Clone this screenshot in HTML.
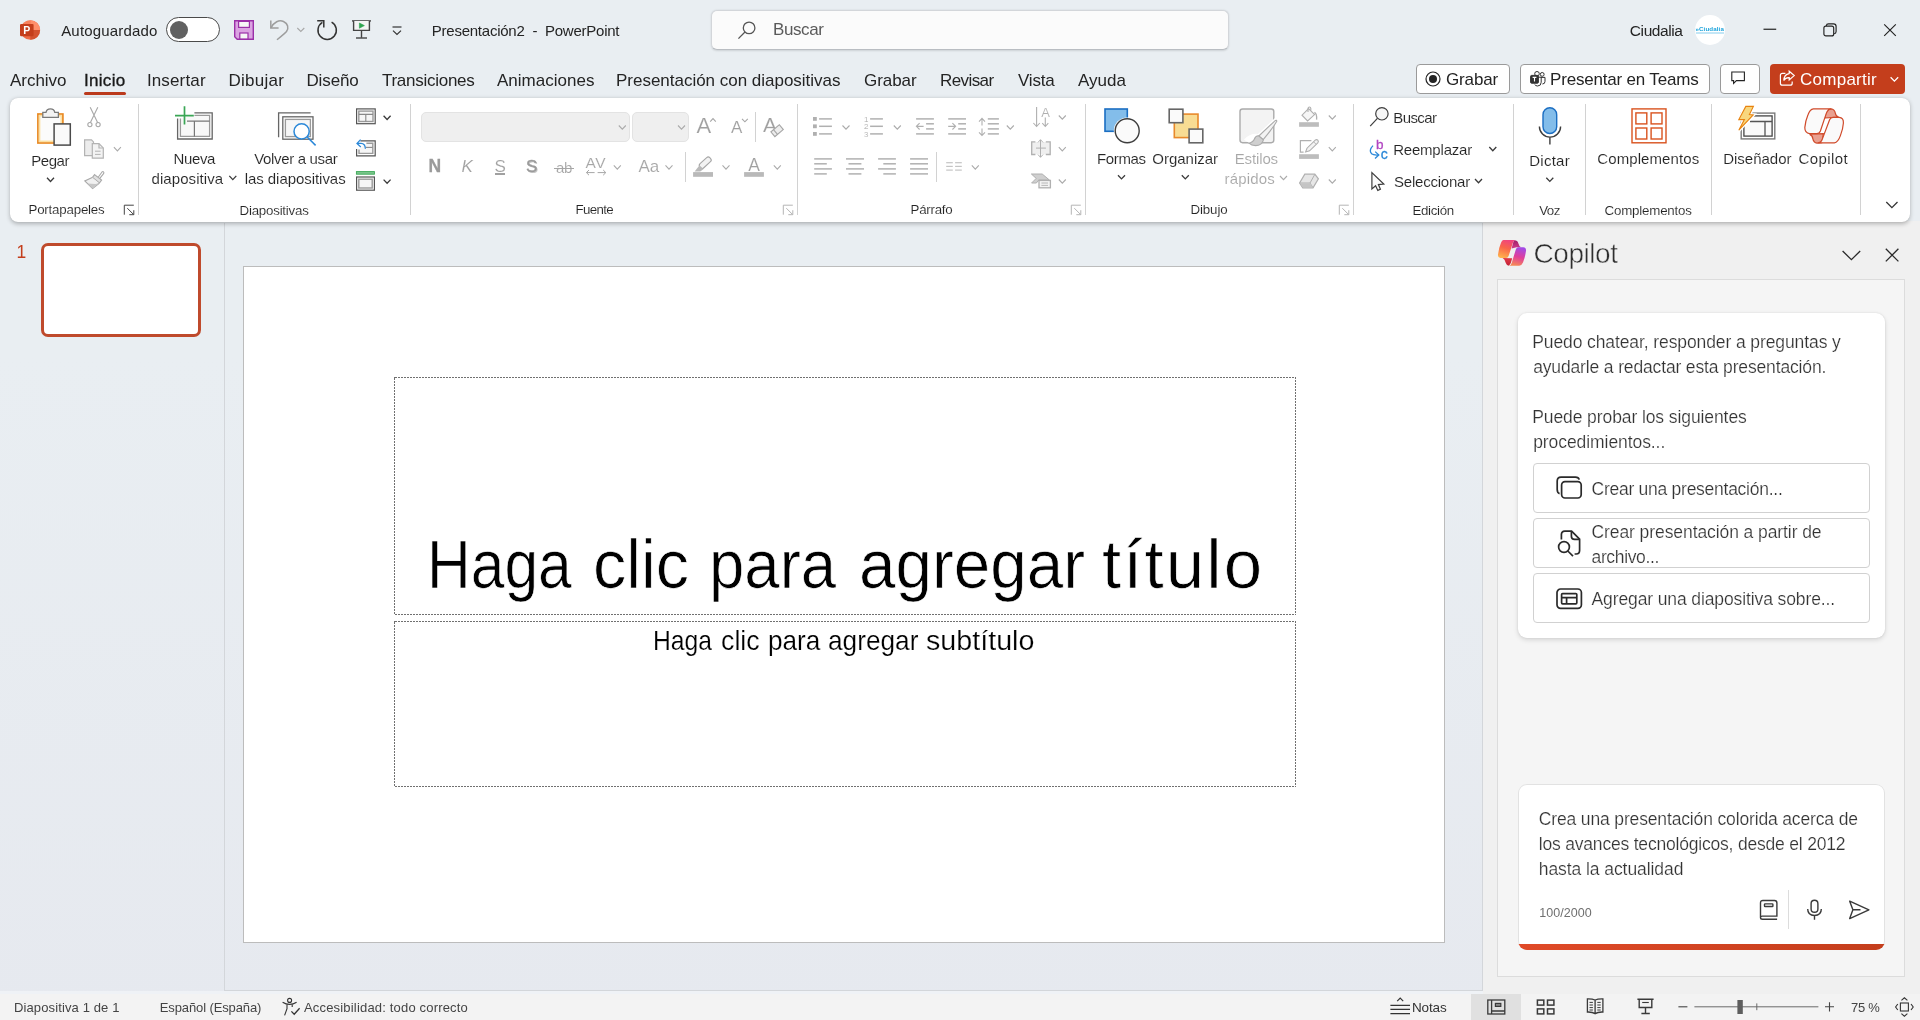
<!DOCTYPE html>
<html lang="es"><head>
<meta charset="utf-8">
<title>Presentación2 - PowerPoint</title>
<style>
html,body{margin:0;padding:0;}
html{background:linear-gradient(180deg,#e9eef2 0%,#e9eef2 35%,#e6e9ef 100%);min-height:1020px;}
body{width:1920px;height:1020px;overflow:hidden;position:relative;will-change:transform;font-family:"Liberation Sans",sans-serif;color:#242424;}
.a{position:absolute;box-sizing:border-box;}
.t{position:absolute;white-space:nowrap;line-height:1;font-size:15px;color:#242424;}
.g{color:#a6a6a6;}
#ribboncontent .t{-webkit-text-stroke:0.12px #fff;}
svg{position:absolute;overflow:visible;}
.sep{position:absolute;width:1px;background:#d2d2d2;}
</style>
</head>
<body>
<!-- ===== background blocks ===== -->
<div class="a" id="editarea" style="left:224px;top:223px;width:1259px;height:768px;border-left:1px solid #d3d6da;border-right:1px solid #d3d6da;border-bottom:1px solid #d3d6da;"></div>
<div class="a" id="slide" style="left:243px;top:266px;width:1202px;height:677px;background:#fff;border:1px solid #bcbcbc;"></div>
<div class="a" id="copilotpane" style="left:1483px;top:221px;width:437px;height:773px;background:#f0f0f0;"></div>
<div class="a" id="chatframe" style="left:1497px;top:279px;width:408px;height:698px;background:#f5f5f5;border:1px solid #dcdcdc;"></div>
<div class="a" id="ribbon" style="left:10px;top:98px;width:1900px;height:124px;background:#fff;border-radius:8px;box-shadow:0 1.5px 4px rgba(0,0,0,.25),0 0 1px rgba(0,0,0,.14);"></div>
<div class="a" style="left:0;top:991px;width:1483px;height:3px;background:#eff2f6;"></div>
<div class="a" id="statusbar" style="left:0;top:994px;width:1920px;height:26px;background:#f3f3f3;"></div>

<!-- ===== TITLE BAR ===== -->
<div id="titlebar">
<!-- PowerPoint logo -->
<svg style="left:20px;top:20px" width="20" height="20" viewBox="0 0 20 20">
  <circle cx="10.3" cy="10" r="9.8" fill="#ed6c47"></circle>
  <path d="M10.3 0.2 A9.8 9.8 0 0 1 20.1 10 L10.3 10 Z" fill="#ff8f6b"></path>
  <path d="M10.3 10 L20.1 10 A9.8 9.8 0 0 1 10.3 19.8 Z" fill="#d35230"></path>
  <path d="M10.3 0.2 A9.8 9.8 0 0 0 2 4.8 L10.3 4.8 Z" fill="#ff8f6b" opacity="0.6"></path>
  <rect x="0" y="3.9" width="13.6" height="12.4" rx="1.2" fill="#c43e1c"></rect>
  <text x="6.7" y="13.9" font-family="Liberation Sans, sans-serif" font-weight="bold" font-size="10.5" fill="#fff" text-anchor="middle">P</text>
</svg>
<span class="t" style="left: 61.2px; font-size: 15px; top: 23px; letter-spacing: 0.171px;">Autoguardado</span>
<div class="a" style="left:166px;top:17px;width:54px;height:25px;border:1px solid #4a4a4a;border-radius:13px;background:#fff;"></div>
<div class="a" style="left:170px;top:20.6px;width:18px;height:18px;border-radius:9px;background:#616161;"></div>
<!-- save -->
<svg style="left:234px;top:20px" width="20" height="20" viewBox="0 0 20 20">
  <path d="M0.7 0.7 H19.3 V19.3 H3.2 L0.7 16.8 Z" fill="#dba3e2" stroke="#9b30a8" stroke-width="1.4"></path>
  <rect x="4.6" y="1.4" width="10.8" height="6" fill="#f6f6f6" stroke="#9b30a8" stroke-width="1.2"></rect>
  <rect x="5.8" y="13" width="8.2" height="6" fill="#f6f6f6" stroke="#9b30a8" stroke-width="1.2"></rect>
</svg>
<!-- undo -->
<svg style="left:269px;top:19px" width="22" height="22" viewBox="0 0 22 22" fill="none" stroke="#9d9d9d" stroke-width="1.5">
  <path d="M1.8 1.5 V9 H9.6"></path>
  <path d="M2 8.8 C5 3 10 0.5 14.5 2.5 C19 4.6 20 9 17.5 12.5 C15 15.5 11 18 8 20.8"></path>
</svg>
<svg style="left:297px;top:27px" width="8" height="5" viewBox="0 0 8 5" fill="none" stroke="#a8a8a8" stroke-width="1.1"><g transform="translate(0.00 0.50)"><path d="M0.3 0.5 L3.8 4 L7.3 0.5"></path></g></svg>
<!-- redo -->
<svg style="left:316px;top:19px" width="22" height="22" viewBox="0 0 22 22" fill="none" stroke="#333" stroke-width="1.5">
  <path d="M6.4 3.4 A9.2 9.2 0 1 0 15.6 3.2"></path>
  <path d="M1.2 1.8 H7.8 V8.4"></path>
</svg>
<!-- present from beginning -->
<svg style="left:352px;top:20px" width="20" height="20" viewBox="0 0 20 20" fill="none" stroke="#444" stroke-width="1.4">
  <path d="M0 0.9 H19"></path>
  <path d="M1.6 1 V10.4 H17.4 V1" fill="#f4f4f4"></path>
  <path d="M9.5 10.4 V17.8"></path>
  <path d="M4 18 H15"></path>
  <path d="M7.4 3 L12.4 5.6 L7.4 8.2 Z" fill="#2ea44f" stroke="#2ea44f" stroke-width="0.6"></path>
</svg>
<!-- customize QAT -->
<svg style="left:392px;top:26px" width="10" height="10" viewBox="0 0 10 10" fill="none" stroke="#333" stroke-width="1.2">
  <path d="M0.5 1 H9.5"></path><path d="M1 4.6 L5 8.4 L9 4.6"></path>
</svg>
<span class="t" style="left: 431.8px; font-size: 15px; white-space: pre; top: 23px; letter-spacing: -0.242px;">Presentación2  -  PowerPoint</span>
<!-- search -->
<div class="a" style="left:711px;top:10px;width:518px;height:40px;background:#fbfbfb;border:1px solid #d3d6da;border-bottom-color:#b9bdc2;border-radius:6px;box-shadow:0 0.5px 2px rgba(0,0,0,.12);"></div>
<svg style="left:737px;top:20px" width="20" height="20" viewBox="0 0 20 20" fill="none" stroke="#555" stroke-width="1.3">
  <circle cx="12.1" cy="7.9" r="5.8"></circle><path d="M8 12 L1.4 18.6"></path>
</svg>
<span class="t" style="left: 773px; font-size: 17px; color: rgb(90, 90, 90); top: 21px; letter-spacing: -0.404px;">Buscar</span>
<!-- user -->
<span class="t" style="left: 1629.8px; font-size: 15.5px; top: 23px; letter-spacing: -0.402px;">Ciudalia</span>
<div class="a" style="left:1695.2px;top:14.8px;width:30px;height:30.2px;border-radius:15.1px;background:#fff;"></div>
<span class="t" style="left: 1695.4px; font-size: 6.2px; font-weight: bold; color: rgb(26, 163, 220); top: 26px; letter-spacing: 0.12px;">»Ciudalia</span>
<div class="a" style="left:1696px;top:32px;width:27.6px;height:1.7px;background:#c3e6f6;"></div>
<!-- window controls -->
<svg style="left:1763px;top:28px" width="14" height="3" viewBox="0 0 14 3"><path d="M0.5 1.25 H13.2" stroke="#222" stroke-width="1.2"></path></svg>
<svg style="left:1823px;top:23px" width="14" height="14" viewBox="0 0 14 14" fill="none" stroke="#222" stroke-width="1.15"><g transform="translate(0.30 0.30)">
  <rect x="0.6" y="2.8" width="9.8" height="9.8" rx="2"></rect><path d="M3 2.6 V2.4 Q3.2 0.6 5.2 0.6 H10.2 Q12.8 0.6 12.8 3.2 V8.2 Q12.8 10.2 10.8 10.4"></path>
</g></svg>
<svg style="left:1883px;top:23px" width="13" height="13" viewBox="0 0 13 13" fill="none" stroke="#222" stroke-width="1.15"><g transform="translate(0.80 0.90)"><path d="M0.4 0.4 L12 12 M12 0.4 L0.4 12"></path></g></svg>
</div>
<!-- ===== TABS ===== -->
<div id="tabs">
<span class="t" style="left: 10px; font-size: 17px; top: 72px; letter-spacing: -0.027px;">Archivo</span>
<span class="t" style="left: 84px; font-size: 17px; color: rgb(26, 26, 26); -webkit-text-stroke: 0.35px rgb(26, 26, 26); top: 72px; letter-spacing: 0.302px;">Inicio</span>
<div class="a" style="left:84px;top:92px;width:41.6px;height:3px;border-radius:1.5px;background:#bb3a1c;"></div>
<span class="t" style="left: 146.9px; font-size: 17px; top: 72px; letter-spacing: 0.145px;">Insertar</span>
<span class="t" style="left: 228.4px; font-size: 17px; top: 72px; letter-spacing: 0.277px;">Dibujar</span>
<span class="t" style="left: 306.4px; font-size: 17px; top: 72px; letter-spacing: -0.104px;">Diseño</span>
<span class="t" style="left: 382px; font-size: 17px; top: 72px; letter-spacing: -0.271px;">Transiciones</span>
<span class="t" style="left: 497px; font-size: 17px; top: 72px; letter-spacing: 0.016px;">Animaciones</span>
<span class="t" style="left: 616px; font-size: 17px; top: 72px; letter-spacing: -0.015px;">Presentación con diapositivas</span>
<span class="t" style="left: 864px; font-size: 17px; top: 72px; letter-spacing: -0.07px;">Grabar</span>
<span class="t" style="left: 940px; font-size: 17px; top: 72px; letter-spacing: -0.589px;">Revisar</span>
<span class="t" style="left: 1018px; font-size: 17px; top: 72px; letter-spacing: -0.2px;">Vista</span>
<span class="t" style="left: 1078px; font-size: 17px; top: 72px; letter-spacing: 0.019px;">Ayuda</span>
<!-- right buttons -->
<div class="a" style="left:1416px;top:64px;width:94px;height:30px;background:#fff;border:1px solid #9a9a9a;border-radius:4px;"></div>
<svg style="left:1425px;top:71px" width="16" height="16" viewBox="0 0 16 16"><circle cx="8" cy="8" r="7" fill="none" stroke="#242424" stroke-width="1.2"></circle><circle cx="8" cy="8" r="4" fill="#242424"></circle></svg>
<span class="t" style="left: 1446px; font-size: 17px; top: 71px; letter-spacing: -0.154px;">Grabar</span>
<div class="a" style="left:1520px;top:64px;width:190px;height:30px;background:#fff;border:1px solid #9a9a9a;border-radius:4px;"></div>
<svg style="left:1530px;top:71px" width="16" height="16" viewBox="0 0 16 16" fill="none" stroke="#333" stroke-width="1">
  <circle cx="12.2" cy="3.4" r="1.9"></circle><circle cx="7" cy="2.8" r="2.3"></circle>
  <path d="M10.8 6.4 H15 V10.4 Q15 13 12.4 13"></path>
  <path d="M4.4 6.2 H11.2 V11.2 Q11.2 15 7.6 15 Q5.6 15 4.6 13.4"></path>
  <rect x="0.6" y="4.4" width="7.8" height="7.8" rx="1" fill="#333"></rect>
  <path d="M2.6 6.4 H6.4 M4.5 6.4 V10.6" stroke="#fff" stroke-width="1.1"></path>
</svg>
<span class="t" style="left: 1550px; font-size: 17px; top: 71px; letter-spacing: -0.185px;">Presentar en Teams</span>
<div class="a" style="left:1720px;top:64px;width:40px;height:30px;background:#fff;border:1px solid #9a9a9a;border-radius:4px;"></div>
<svg style="left:1731px;top:71px" width="16" height="16" viewBox="0 0 16 16" fill="none" stroke="#242424" stroke-width="1.1"><path d="M0.8 1 H13.4 V9.6 H5.4 L2.6 12.4 V9.6 H0.8 Z"></path></svg>
<div class="a" style="left:1770px;top:64px;width:135px;height:30px;background:#c43e1c;border-radius:4px;"></div>
<svg style="left:1779px;top:70px" width="17" height="17" viewBox="0 0 17 17" fill="none" stroke="#fff" stroke-width="1.2">
  <path d="M6.4 3.4 H3.4 Q1.4 3.4 1.4 5.4 V13.2 Q1.4 15.2 3.4 15.2 H11.2 Q13.2 15.2 13.2 13.2 V11.6"></path>
  <path d="M10.2 1.2 L15.2 5.6 L10.2 10 V7.6 Q6.4 7.4 4.8 10.6 Q5 4.4 10.2 3.6 Z"></path>
</svg>
<span class="t" style="left: 1800px; font-size: 17px; color: rgb(255, 255, 255); top: 71px; letter-spacing: 0.264px;">Compartir</span>
<svg style="left:1890px;top:76px" width="9" height="6" viewBox="0 0 9 6" fill="none" stroke="#fff" stroke-width="1.3"><g transform="translate(0.00 0.50)"><path d="M0.6 0.8 L4.4 4.6 L8.2 0.8"></path></g></svg>
</div>
<!-- ===== RIBBON CONTENT ===== -->
<div id="ribboncontent">
<!-- separators -->
<div class="sep" style="left:138px;top:104px;height:111px"></div>
<div class="sep" style="left:410px;top:104px;height:111px"></div>
<div class="sep" style="left:797px;top:104px;height:111px"></div>
<div class="sep" style="left:1085px;top:104px;height:111px"></div>
<div class="sep" style="left:1353px;top:104px;height:111px"></div>
<div class="sep" style="left:1513px;top:104px;height:111px"></div>
<div class="sep" style="left:1585px;top:104px;height:111px"></div>
<div class="sep" style="left:1711px;top:104px;height:111px"></div>
<div class="sep" style="left:1860px;top:104px;height:111px"></div>
<div class="sep" style="left:755px;top:112px;height:30px"></div>
<div class="sep" style="left:685px;top:152px;height:30px"></div>
<div class="sep" style="left:936px;top:152px;height:30px"></div>
<!-- font boxes -->
<div class="a" style="left:421px;top:112px;width:209px;height:30px;background:#efefef;border:1px solid #e3e3e3;border-radius:5px;"></div>
<div class="a" style="left:632px;top:112px;width:57px;height:30px;background:#efefef;border:1px solid #e3e3e3;border-radius:5px;"></div>
<!-- big button labels -->
<span class="t" style="left: 31.3px; top: 153px; letter-spacing: -0.466px;">Pegar</span>
<span class="t" style="left: 173.4px; top: 151px; letter-spacing: -0.332px;">Nueva</span>
<span class="t" style="left: 151.5px; top: 171px; letter-spacing: 0.074px;">diapositiva</span>
<span class="t" style="left: 254.2px; top: 151px; letter-spacing: -0.334px;">Volver a usar</span>
<span class="t" style="left: 244.7px; top: 171px; letter-spacing: -0.051px;">las diapositivas</span>
<span class="t" style="left: 1097px; top: 151px; letter-spacing: -0.374px;">Formas</span>
<span class="t" style="left: 1152.3px; top: 151px; letter-spacing: -0.018px;">Organizar</span>
<span class="t g" style="left: 1234.7px; top: 151px; letter-spacing: -0.127px;">Estilos</span>
<span class="t g" style="left: 1224.5px; top: 171px; letter-spacing: 0.185px;">rápidos</span>
<span class="t" style="left: 1393.2px; top: 110px; letter-spacing: -0.565px;">Buscar</span>
<span class="t" style="left: 1393.2px; top: 142px; letter-spacing: -0.208px;">Reemplazar</span>
<span class="t" style="left: 1394px; top: 174px; letter-spacing: -0.217px;">Seleccionar</span>
<span class="t" style="left: 1529.2px; top: 153px; letter-spacing: 0.271px;">Dictar</span>
<span class="t" style="left: 1597.3px; top: 151px; letter-spacing: 0.092px;">Complementos</span>
<span class="t" style="left: 1723.2px; top: 151px; letter-spacing: -0.008px;">Diseñador</span>
<span class="t" style="left: 1798.5px; top: 151px; letter-spacing: 0.4px;">Copilot</span>
<!-- group labels -->
<span class="t" style="left: 28.5px; font-size: 13.3px; top: 203px; letter-spacing: -0.198px;">Portapapeles</span>
<span class="t" style="left: 239.6px; font-size: 13.3px; top: 204px; letter-spacing: -0.224px;">Diapositivas</span>
<span class="t" style="left: 575.5px; font-size: 13.3px; top: 203px; letter-spacing: -0.651px;">Fuente</span>
<span class="t" style="left: 910.5px; font-size: 13.3px; top: 203px; letter-spacing: -0.23px;">Párrafo</span>
<span class="t" style="left: 1190.5px; font-size: 13.3px; top: 203px; letter-spacing: -0.117px;">Dibujo</span>
<span class="t" style="left: 1412.5px; font-size: 13.3px; top: 204px; letter-spacing: -0.332px;">Edición</span>
<span class="t" style="left: 1539.2px; font-size: 13.3px; top: 204px; letter-spacing: -0.462px;">Voz</span>
<span class="t" style="left: 1604.5px; font-size: 13.3px; top: 204px; letter-spacing: -0.178px;">Complementos</span>
<!-- font row letters -->
<span class="t" style="left: 428.5px; font-size: 17.5px; font-weight: bold; color: rgb(154, 154, 154); -webkit-text-stroke: 0.3px rgb(154, 154, 154); top: 158px; letter-spacing: 0.859px;">N</span>
<span class="t" style="left: 461.5px; font-size: 17px; font-style: italic; color: rgb(160, 160, 160); top: 158px; letter-spacing: 0.656px;">K</span>
<span class="t" style="left: 494.6px; font-size: 17px; color: rgb(160, 160, 160); top: 158px; letter-spacing: -0.844px;">S</span>
<div class="a" style="left:495px;top:173.4px;width:10px;height:1.2px;background:#a0a0a0"></div>
<span class="t" style="left: 526px; font-size: 17px; color: rgb(154, 154, 154); text-shadow: rgb(200, 200, 200) 1px 1px 0px; -webkit-text-stroke: 0.4px rgb(154, 154, 154); top: 158px; letter-spacing: -1.744px;">S</span>
<span class="t" style="left: 556px; font-size: 15px; color: rgb(166, 166, 166); top: 160px; letter-spacing: -0.344px;">ab</span>
<div class="a" style="left:553.7px;top:168.2px;width:20.5px;height:1.2px;background:#a6a6a6"></div>
<span class="t" style="left: 585.5px; font-size: 15.5px; color: rgb(166, 166, 166); top: 155px; letter-spacing: 0.584px;">AV</span>
<span class="t" style="left: 638.5px; font-size: 17px; color: rgb(166, 166, 166); top: 158px; letter-spacing: -0.148px;">Aa</span>
<span class="t" style="left: 696.5px; font-size: 22px; color: rgb(160, 160, 160); top: 115px; letter-spacing: 0.813px;">A</span>
<span class="t" style="left: 731px; font-size: 17px; color: rgb(160, 160, 160); top: 119px; letter-spacing: 0.656px;">A</span>
<span class="t" style="left: 763px; font-size: 21px; color: rgb(160, 160, 160); top: 114px; letter-spacing: -0.016px;">A</span>
<span class="t" style="left: 748.3px; font-size: 17.5px; color: rgb(160, 160, 160); top: 157px;">A</span>
<span class="t" style="left: 864px; font-size: 8px; color: rgb(166, 166, 166); top: 116px;">1</span>
<span class="t" style="left: 864px; font-size: 8px; color: rgb(166, 166, 166); top: 123px;">2</span>
<span class="t" style="left: 864px; font-size: 8px; color: rgb(166, 166, 166); top: 131px;">3</span>
<span class="t" style="left: 1041.2px; font-size: 13px; color: rgb(176, 176, 176); top: 106px;">A</span>
<span class="t" style="left: 1376px; font-size: 13.5px; color: rgb(177, 70, 194); -webkit-text-stroke: 0.3px rgb(177, 70, 194); top: 138px;">b</span>
<span class="t" style="left: 1380.8px; font-size: 14px; color: rgb(43, 136, 216); -webkit-text-stroke: 0.3px rgb(43, 136, 216); top: 147px;">c</span>
<svg id="ribbonicons" style="left:0;top:0" width="1920" height="230" viewBox="0 0 1920 230" fill="none">
<!--ICONS--><path d="M47.0 177.8 l3.50 3.70 l3.50 -3.70" stroke="#3a3a3a" stroke-width="1.3"></path>
<path d="M229.3 175.9 l3.50 3.70 l3.50 -3.70" stroke="#3a3a3a" stroke-width="1.3"></path>
<path d="M383.6 115.8 l3.50 3.70 l3.50 -3.70" stroke="#3a3a3a" stroke-width="1.3"></path>
<path d="M383.6 179.6 l3.50 3.70 l3.50 -3.70" stroke="#3a3a3a" stroke-width="1.3"></path>
<path d="M1118.0 175.2 l3.50 3.70 l3.50 -3.70" stroke="#3a3a3a" stroke-width="1.3"></path>
<path d="M1181.8 175.2 l3.50 3.70 l3.50 -3.70" stroke="#3a3a3a" stroke-width="1.3"></path>
<path d="M1489.3 147.0 l3.50 3.70 l3.50 -3.70" stroke="#3a3a3a" stroke-width="1.3"></path>
<path d="M1475.0 179.0 l3.50 3.70 l3.50 -3.70" stroke="#3a3a3a" stroke-width="1.3"></path>
<path d="M1546.3 177.7 l3.50 3.70 l3.50 -3.70" stroke="#3a3a3a" stroke-width="1.3"></path>
<path d="M113.9 147.2 l3.50 3.70 l3.50 -3.70" stroke="#ababab" stroke-width="1.1"></path>
<path d="M618.8 125.5 l3.50 3.70 l3.50 -3.70" stroke="#ababab" stroke-width="1.1"></path>
<path d="M678.0 125.5 l3.50 3.70 l3.50 -3.70" stroke="#ababab" stroke-width="1.1"></path>
<path d="M613.8 165.4 l3.50 3.70 l3.50 -3.70" stroke="#ababab" stroke-width="1.1"></path>
<path d="M665.5 165.4 l3.50 3.70 l3.50 -3.70" stroke="#ababab" stroke-width="1.1"></path>
<path d="M722.5 165.4 l3.50 3.70 l3.50 -3.70" stroke="#ababab" stroke-width="1.1"></path>
<path d="M773.8 165.4 l3.50 3.70 l3.50 -3.70" stroke="#ababab" stroke-width="1.1"></path>
<path d="M842.5 125.5 l3.50 3.70 l3.50 -3.70" stroke="#ababab" stroke-width="1.1"></path>
<path d="M893.8 125.5 l3.50 3.70 l3.50 -3.70" stroke="#ababab" stroke-width="1.1"></path>
<path d="M1006.8 125.5 l3.50 3.70 l3.50 -3.70" stroke="#ababab" stroke-width="1.1"></path>
<path d="M971.8 165.4 l3.50 3.70 l3.50 -3.70" stroke="#ababab" stroke-width="1.1"></path>
<path d="M1058.8 115.5 l3.50 3.70 l3.50 -3.70" stroke="#ababab" stroke-width="1.1"></path>
<path d="M1058.8 147.2 l3.50 3.70 l3.50 -3.70" stroke="#ababab" stroke-width="1.1"></path>
<path d="M1058.8 179.5 l3.50 3.70 l3.50 -3.70" stroke="#ababab" stroke-width="1.1"></path>
<path d="M1280.0 176.0 l3.50 3.70 l3.50 -3.70" stroke="#ababab" stroke-width="1.1"></path>
<path d="M1328.8 115.5 l3.50 3.70 l3.50 -3.70" stroke="#ababab" stroke-width="1.1"></path>
<path d="M1328.8 147.2 l3.50 3.70 l3.50 -3.70" stroke="#ababab" stroke-width="1.1"></path>
<path d="M1328.8 179.5 l3.50 3.70 l3.50 -3.70" stroke="#ababab" stroke-width="1.1"></path>
<path d="M124.3 214.7 V205.2 H133.8" stroke="#444" stroke-width="1"></path><path d="M127.3 208.2 L133.6 214.5 M129.3 214.7 H133.8 V210.2" stroke="#444" stroke-width="1"></path>
<path d="M783.3 214.7 V205.2 H792.8" stroke="#b5b5b5" stroke-width="1"></path><path d="M786.3 208.2 L792.6 214.5 M788.3 214.7 H792.8 V210.2" stroke="#b5b5b5" stroke-width="1"></path>
<path d="M1071.3 214.7 V205.2 H1080.8" stroke="#b5b5b5" stroke-width="1"></path><path d="M1074.3 208.2 L1080.6 214.5 M1076.3 214.7 H1080.8 V210.2" stroke="#b5b5b5" stroke-width="1"></path>
<path d="M1339.3 214.7 V205.2 H1348.8" stroke="#b5b5b5" stroke-width="1"></path><path d="M1342.3 208.2 L1348.6 214.5 M1344.3 214.7 H1348.8 V210.2" stroke="#b5b5b5" stroke-width="1"></path>
<path d="M1886.3 202 l5.6 5.6 l5.6 -5.6" stroke="#333" stroke-width="1.3"></path>

<g id="paste">
 <rect x="37.9" y="114" width="25" height="29" fill="#fbfbfb" stroke="#e98b25" stroke-width="1.7"></rect>
 <rect x="39.6" y="115.7" width="21.6" height="25.6" fill="none" stroke="#fbdf9f" stroke-width="1.5"></rect>
 <path d="M42.8 117.3 V112.4 H46 Q46.6 108.8 50.4 108.8 Q54.2 108.8 54.8 112.4 H58.4 V117.3 Z" fill="#f3f3f3" stroke="#7a7a7a" stroke-width="1.3"></path>
 <rect x="54.1" y="123.9" width="16.2" height="21.2" fill="#fafafa" stroke="#4a4a4a" stroke-width="1.5"></rect>
</g>
<g id="cut" stroke="#a8a8a8" stroke-width="1.1">
 <path d="M90.2 107.2 L97.6 122.4 M97.8 107.2 L90.4 122.4"></path>
 <circle cx="89.9" cy="124.6" r="2.1"></circle><circle cx="98.1" cy="124.6" r="2.1"></circle>
</g>
<g id="copy" stroke="#b3b3b3" stroke-width="1.2">
 <path d="M84.6 139.9 H91.5 L93.5 141.9 V155.6 H84.6 Z" fill="#ececec"></path>
 <path d="M92.3 143.6 H99 L103.3 147.9 V158.2 H92.3 Z" fill="#f3f3f3"></path>
 <path d="M99 143.8 V148 H103.2"></path>
 <path d="M95 151.2 H100.6 M95 154.4 H100.6" stroke-width="1"></path>
</g>
<g id="painter" stroke="#a8a8a8" stroke-width="1.1">
 <path d="M98.2 177.2 L102 172 Q103 171 103.6 172 Q104.4 173 103.4 173.8 L99.6 178.6"></path>
 <path d="M94.6 174.6 L101.6 180 L99.4 183 L92.4 177.4 Z" fill="#e0e0e0"></path>
 <path d="M92.2 177.6 L84.8 181 L92.6 188.6 L99.2 183.2" fill="#f0f0f0"></path>
 <path d="M87.6 183.6 L92.6 188.6 L99.2 183.2 L95.6 184 Z" fill="#c6c6c6" stroke="none"></path>
</g>


<g id="newslide">
 <path d="M177.6 118.4 V139 H212.2 V112.8 H194.4" stroke="#666" stroke-width="1.3" fill="none"></path>
 <path d="M180.4 118.4 V136.4 H209.6 V115.4 H194.4" stroke="#9a9a9a" stroke-width="1.3" fill="#f8f8f8"></path>
 <path d="M187 121.2 H209.6 M194.4 121.2 V136.4" stroke="#777" stroke-width="1.2"></path>
 <path d="M175 115.6 H193.8 M184.5 106.2 V124.6" stroke="#3aa655" stroke-width="1.7"></path>
</g>
<g id="reuse">
 <path d="M278.6 137.2 V112.8 H310.6" stroke="#666" stroke-width="1.3"></path>
 <rect x="282.8" y="116.8" width="30.2" height="22.4" fill="none" stroke="#666" stroke-width="1.3"></rect>
 <rect x="285.4" y="119.4" width="25" height="17.2" fill="#f6f6f6" stroke="#9a9a9a" stroke-width="1.3"></rect>
 <circle cx="301.6" cy="131.4" r="7.6" fill="#fff" stroke="#2b88d8" stroke-width="1.5"></circle>
 <path d="M307.2 137 L315.6 145.4" stroke="#2b88d8" stroke-width="1.5"></path>
</g>
<g id="layout">
 <rect x="356.6" y="108.9" width="18.6" height="14.8" fill="none" stroke="#555" stroke-width="1.2"></rect>
 <rect x="358.8" y="111.1" width="14.2" height="10.4" fill="#f6f6f6" stroke="#9a9a9a" stroke-width="1.4"></rect>
 <path d="M358.8 114.4 H373 M365.8 114.4 V121.4" stroke="#888" stroke-width="1.1"></path>
</g>
<g id="reset">
 <path d="M360.4 140.9 H375.2 V155.8 H356.6 V149" stroke="#555" stroke-width="1.2"></path>
 <path d="M366.4 143.2 H372.8 V153.4 H359 V149.6" stroke="#9a9a9a" stroke-width="1.4" fill="#f6f6f6"></path>
 <path d="M366 147.4 H372.6" stroke="#888" stroke-width="1.1"></path>
 <path d="M360.6 139.6 L357 143.4 L360.8 147 M357.2 143.4 H361 Q365.2 143.6 365.4 148.8" stroke="#2b88d8" stroke-width="1.3"></path>
</g>
<g id="section">
 <rect x="356.4" y="171.6" width="18" height="2.6" fill="#7cc68d" stroke="#3aa655" stroke-width="0.9"></rect>
 <rect x="356.6" y="177" width="17.8" height="13.2" fill="none" stroke="#555" stroke-width="1.2"></rect>
 <rect x="358.8" y="179.2" width="13.4" height="8.8" fill="#f6f6f6" stroke="#9a9a9a" stroke-width="1.4"></rect>
</g>

<g id="fonticons" stroke="#a6a6a6" stroke-width="1.1">
 <path d="M710.2 121.6 L713 118.6 L715.8 121.6"></path>
 <path d="M742 118.8 L744.9 121.8 L747.8 118.8"></path>
 <g transform="rotate(-40 777.1 130.7)"><rect x="771.6" y="127.6" width="11" height="6.2" fill="#ededed"></rect><path d="M775 127.6 V133.8"></path></g>
 <path d="M586.6 172.6 H594.6 M597.6 172.6 H605.6 M589 170 L586.4 172.6 L589 175.2 M603.2 170 L605.8 172.6 L603.2 175.2" stroke-width="1"></path>
</g>
<g id="highlighter">
 <rect x="693.1" y="172.1" width="19.9" height="4.7" fill="#b9b9b9"></rect>
 <g transform="rotate(-42.5 704.6 163)"><rect x="698.6" y="160.4" width="13.4" height="5.6" rx="2.2" fill="#f3f3f3" stroke="#a6a6a6" stroke-width="1.1"></rect></g>
 <path d="M699.4 165.6 L703.4 169.2 L700.2 171.4 H694.6 Z" fill="#b9b9b9"></path>
 <rect x="744.1" y="172.1" width="19.8" height="4.7" fill="#b9b9b9"></rect>
</g>

<rect x="813" y="117.0" width="3.8" height="3.8" fill="#b0b0b0"></rect>
<path d="M819.1 118.9 H831.9" stroke="#b0b0b0" stroke-width="1.5"></path>
<path d="M870.1 118.9 H882.9" stroke="#b0b0b0" stroke-width="1.5"></path>
<rect x="813" y="124.4" width="3.8" height="3.8" fill="#b0b0b0"></rect>
<path d="M819.1 126.3 H831.9" stroke="#b0b0b0" stroke-width="1.5"></path>
<path d="M870.1 126.3 H882.9" stroke="#b0b0b0" stroke-width="1.5"></path>
<rect x="813" y="132.0" width="3.8" height="3.8" fill="#b0b0b0"></rect>
<path d="M819.1 133.9 H831.9" stroke="#b0b0b0" stroke-width="1.5"></path>
<path d="M870.1 133.9 H882.9" stroke="#b0b0b0" stroke-width="1.5"></path>
<path d="M916.1 118.9 H933.9" stroke="#b0b0b0" stroke-width="1.5"></path>
<path d="M916.1 133.9 H933.9" stroke="#b0b0b0" stroke-width="1.5"></path>
<path d="M926.1 123.8 H933.9" stroke="#b0b0b0" stroke-width="1.5"></path>
<path d="M926.1 128.9 H933.9" stroke="#b0b0b0" stroke-width="1.5"></path>
<path d="M923.6 126.35 H916.6 M919.6 123.2 L916.4 126.35 L919.6 129.5" stroke="#b0b0b0" stroke-width="1.1"></path>
<path d="M948.2 118.9 H966.0" stroke="#b0b0b0" stroke-width="1.5"></path>
<path d="M948.2 133.9 H966.0" stroke="#b0b0b0" stroke-width="1.5"></path>
<path d="M958.2 123.8 H966.0" stroke="#b0b0b0" stroke-width="1.5"></path>
<path d="M958.2 128.9 H966.0" stroke="#b0b0b0" stroke-width="1.5"></path>
<path d="M948.2 126.35 H955.4 M952.4 123.2 L955.6 126.35 L952.4 129.5" stroke="#b0b0b0" stroke-width="1.1"></path>
<path d="M987.8 118.9 H998.9" stroke="#b0b0b0" stroke-width="1.5"></path>
<path d="M987.8 123.8 H998.9" stroke="#b0b0b0" stroke-width="1.5"></path>
<path d="M987.8 128.9 H998.9" stroke="#b0b0b0" stroke-width="1.5"></path>
<path d="M987.8 133.9 H998.9" stroke="#b0b0b0" stroke-width="1.5"></path>
<path d="M982 118.6 V125.4 M979 121.6 L982 118.4 L985 121.6 M982 128.4 V135.3 M979 132.3 L982 135.5 L985 132.3" stroke="#b0b0b0" stroke-width="1.1"></path>
<path d="M814.2 158.9 H831.9" stroke="#b0b0b0" stroke-width="1.5"></path>
<path d="M846.0 158.9 H864.0" stroke="#b0b0b0" stroke-width="1.5"></path>
<path d="M878.1 158.9 H895.9" stroke="#b0b0b0" stroke-width="1.5"></path>
<path d="M910.1 158.9 H928.0" stroke="#b0b0b0" stroke-width="1.5"></path>
<path d="M814.2 163.8 H826.8" stroke="#b0b0b0" stroke-width="1.5"></path>
<path d="M848.5 163.8 H861.4" stroke="#b0b0b0" stroke-width="1.5"></path>
<path d="M883.3 163.8 H895.9" stroke="#b0b0b0" stroke-width="1.5"></path>
<path d="M910.1 163.8 H928.0" stroke="#b0b0b0" stroke-width="1.5"></path>
<path d="M814.2 168.9 H831.9" stroke="#b0b0b0" stroke-width="1.5"></path>
<path d="M846.0 168.9 H864.0" stroke="#b0b0b0" stroke-width="1.5"></path>
<path d="M878.1 168.9 H895.9" stroke="#b0b0b0" stroke-width="1.5"></path>
<path d="M910.1 168.9 H928.0" stroke="#b0b0b0" stroke-width="1.5"></path>
<path d="M814.2 173.9 H826.8" stroke="#b0b0b0" stroke-width="1.5"></path>
<path d="M848.5 173.9 H861.4" stroke="#b0b0b0" stroke-width="1.5"></path>
<path d="M883.3 173.9 H895.9" stroke="#b0b0b0" stroke-width="1.5"></path>
<path d="M910.1 173.9 H928.0" stroke="#b0b0b0" stroke-width="1.5"></path>
<path d="M946.2 162.7 H952.8" stroke="#c4c4c4" stroke-width="1.2"></path>
<path d="M955.1 162.7 H961.8" stroke="#c4c4c4" stroke-width="1.2"></path>
<path d="M946.2 166.4 H952.8" stroke="#c4c4c4" stroke-width="1.2"></path>
<path d="M955.1 166.4 H961.8" stroke="#c4c4c4" stroke-width="1.2"></path>
<path d="M946.2 170.1 H952.8" stroke="#c4c4c4" stroke-width="1.2"></path>
<path d="M955.1 170.1 H961.8" stroke="#c4c4c4" stroke-width="1.2"></path>

<g stroke="#b0b0b0" stroke-width="1.1">
 <path d="M1036.6 107 V126.3 M1033.4 123 L1036.6 126.5 L1039.8 123"></path>
 <path d="M1045.3 117.4 V126.3 M1042.3 123.2 L1045.3 126.5 L1048.3 123.2"></path>
 <rect x="1032" y="142" width="18" height="12.4" fill="#efefef" stroke="none"></rect>
 <path d="M1035.4 141.9 H1031.7 V154.5 H1035.4 M1045.8 141.9 H1050.2 V154.5 H1045.8" stroke-width="1.3"></path>
 <path d="M1040.5 139.8 V157.2 M1038 142.4 L1040.5 139.7 L1043 142.4 M1038 154.6 L1040.5 157.3 L1043 154.6" stroke-width="1"></path>
 <path d="M1036 148.1 H1045.9" stroke-width="1"></path>
 <path d="M1031.4 174 H1042.2 L1049.4 180 H1038.8 L1036.4 183 H1031.6 L1036.2 178.4 Z" fill="#cfcfcf" stroke-width="1"></path>
 <rect x="1039" y="180.4" width="11.4" height="7.4" fill="#f3f3f3" stroke-width="1.3"></rect>
 <path d="M1041.4 183 H1048 M1041.4 185.4 H1048" stroke-width="0.9"></path>
</g>

<g stroke="#b0b0b0" stroke-width="1.1">
 <rect x="1299.1" y="122.2" width="19.8" height="4.6" fill="#bdbdbd" stroke="none"></rect>
 <path d="M1308.6 108.6 L1314.6 114.6 L1307.6 121 L1302 115.2 Z" fill="#f6f6f6"></path>
 <path d="M1308 112 V108.4 Q1308.2 107 1309.4 107 Q1310.6 107 1310.8 108.4 V110.6"></path>
 <path d="M1314.4 112.4 Q1317 113.4 1316.6 119.6" stroke-width="1.3"></path>
 <rect x="1299.1" y="154.2" width="19.8" height="4.7" fill="#bdbdbd" stroke="none"></rect>
 <path d="M1311.4 140.6 H1300.4 V152.2 H1303.6" stroke-width="1.2"></path>
 <path d="M1315.2 140.2 Q1316.6 139 1317.8 140.2 Q1319 141.6 1317.8 142.8 L1309.6 150.8 L1305.6 152 L1307 148.2 Z" fill="#f3f3f3"></path>
 <path d="M1313.6 141.8 L1316.2 144.4" stroke-width="0.9"></path>
 <path d="M1304.8 174.2 H1314.8 L1318.4 178.8 L1313 187.8 H1302.8 L1299.6 183 Z" fill="#e6e6e6" stroke-width="1.2"></path>
 <path d="M1299.8 183 H1310 L1314.8 174.4 M1310 183 L1313 187.6" stroke-width="1"></path>
 <path d="M1299.8 183.2 H1310 L1312.8 187.6 H1302.8 Z" fill="#c4c4c4" stroke="none"></path>
</g>
<g id="formas">
 <rect x="1105" y="109" width="22.3" height="22.3" fill="#83bdea" stroke="#1b6ec2" stroke-width="1.6"></rect>
 <circle cx="1127.2" cy="130.8" r="13.4" fill="#fff"></circle>
 <circle cx="1127.2" cy="130.8" r="12" fill="#fafafa" stroke="#3d3d3d" stroke-width="1.4"></circle>
</g>
<g id="organizar">
 <rect x="1174.3" y="114.1" width="23.7" height="23.5" fill="#f8dc93" stroke="#e8892b" stroke-width="1.6"></rect>
 <rect x="1169.2" y="109.2" width="13.7" height="13.5" fill="#fafafa" stroke="#666" stroke-width="1.6"></rect>
 <rect x="1189.1" y="129.1" width="13.7" height="13.7" fill="#fafafa" stroke="#666" stroke-width="1.6"></rect>
</g>
<g id="estilos">
 <rect x="1240" y="109" width="33.8" height="33.7" rx="2.6" fill="#f3f3f3" stroke="#ababab" stroke-width="1.4"></rect>
 <path d="M1244 139.5 Q1252 147 1262 141 L1278 120 L1275 118 L1258 134 Q1250 133 1244 139.5 Z" fill="#fff" stroke="none"></path>
 <path d="M1258.8 136 L1275.4 120.4 Q1276.6 119.8 1276.8 121.2 Q1273 128 1263.2 139.6 Z" fill="#f3f3f3" stroke="#ababab" stroke-width="1.1"></path>
 <path d="M1258.6 135.8 L1263.4 139.8 Q1262 145.4 1255.6 145.6 Q1251.4 145.6 1249 143.2 Q1253.4 142 1254.4 139 Q1255.6 135.6 1258.6 135.8 Z" fill="#cfcfcf" stroke="#ababab" stroke-width="1.1"></path>
</g>
<g id="buscar">
 <circle cx="1381.9" cy="113.8" r="6.2" fill="#f6f6f6" stroke="#3d3d3d" stroke-width="1.2"></circle>
 <path d="M1377.4 118.4 L1370.2 126.2" stroke="#3d3d3d" stroke-width="1.2"></path>
</g>
<g id="reemplazar" stroke="#2b88d8" stroke-width="1.3">
 <path d="M1373 145.6 Q1368.4 150.4 1371.6 153.8 Q1373.6 155.4 1378.4 155"></path>
 <path d="M1375.2 151.6 L1378.8 155 L1375 158.4"></path>
</g>
<g id="seleccionar">
 <path d="M1371.9 172.6 V189 L1375.6 185.8 L1377.8 190.4 L1380.4 189.2 L1378.4 184.6 L1383.8 184 Z" fill="#fafafa" stroke="#3d3d3d" stroke-width="1.2" stroke-linejoin="miter"></path>
</g>
<g id="dictar">
 <rect x="1543" y="107.8" width="13.7" height="25.7" rx="6.85" fill="#83bdea" stroke="#1b6ec2" stroke-width="1.4"></rect>
 <path d="M1539.4 126.5 A10.6 10.6 0 0 0 1560.6 126.5" stroke="#3d3d3d" stroke-width="1.4"></path>
 <path d="M1549.9 137.2 V144.6" stroke="#3d3d3d" stroke-width="1.4"></path>
</g>
<g id="complementos" stroke="#d9531e" stroke-width="1.4">
 <rect x="1632" y="108.9" width="34" height="33.9"></rect>
 <rect x="1635.9" y="112.9" width="10.9" height="11"></rect>
 <rect x="1651.1" y="112.9" width="10.9" height="11"></rect>
 <rect x="1635.9" y="128" width="10.9" height="11"></rect>
 <rect x="1651.1" y="128" width="10.9" height="11"></rect>
</g>
<g id="disenador">
 <rect x="1741.2" y="113.1" width="33.6" height="25.8" fill="none" stroke="#7a7a7a" stroke-width="1.4"></rect>
 <rect x="1743.9" y="115.9" width="28.2" height="20.2" fill="#fafafa" stroke="#444" stroke-width="1.3"></rect>
 <path d="M1750 121.5 H1772 M1765 121.5 V136" stroke="#555" stroke-width="1.3"></path>
 <path d="M1745.8 106.4 H1753.4 L1749.4 114.6 L1753.2 115 L1738.8 130.2 L1744.4 119.6 H1738.8 Z" fill="#fff" stroke="#fff" stroke-width="3.6"></path>
 <path d="M1745.8 106.4 H1753.4 L1749.4 114.6 L1753.2 115 L1738.8 130.2 L1744.4 119.6 H1738.8 Z" fill="#f8d77e" stroke="#e8820e" stroke-width="1.1" stroke-linejoin="miter"></path>
</g>
<g id="copilotbtn" stroke="#d04a2a" stroke-width="1.2" stroke-linejoin="round">
 <path d="M1826.6 110 L1831 108.8 Q1834.6 109 1835.4 113.4 Q1836 116.6 1838.4 117.2 L1824.8 118 Z" fill="#e9a090"></path>
 <path d="M1812.4 134 L1823.4 133.6 L1822 142.6 L1817 143.2 Q1813.6 142.6 1812.8 138.6 Q1812.4 135.4 1810 134.6 Z" fill="#e9a090"></path>
 <path d="M1813.4 108.9 H1830.6 Q1827.6 109.6 1826.2 113.6 L1820.4 131 Q1819.4 133.6 1816.8 133.6 H1809.6 Q1804.8 133.2 1804.8 127.6 Q1805.4 121 1808 114.8 Q1810 109.4 1813.4 108.9 Z" fill="#fafafa"></path>
 <path d="M1829.6 119.8 Q1830.6 117.4 1833 117.4 H1839.2 Q1843.6 117.6 1843.4 123 Q1843 129 1840.4 135.6 Q1838 142.4 1834.4 142.8 H1818.4 Q1821.4 142.4 1822.6 138.4 Z" fill="#fafafa"></path>
</g>
<!--/ICONS-->
</svg>
</div>
<!-- ===== THUMBNAILS ===== -->
<div id="thumbs">
<span class="t" style="left: 16.5px; font-size: 17.5px; color: rgb(196, 62, 28); top: 244px;">1</span>
<div class="a" style="left:41px;top:243px;width:160px;height:94px;background:#fff;border:3px solid #bf4a2c;border-radius:7px;"></div>
</div>
<!-- ===== SLIDE CONTENT ===== -->
<div id="slidecontent">
<svg style="left:0;top:0" width="1920" height="1020" viewBox="0 0 1920 1020" fill="none" stroke="#707070" stroke-width="1" stroke-dasharray="2 1" shape-rendering="crispEdges">
 <rect x="394.5" y="377.5" width="901" height="237"></rect>
 <rect x="394.5" y="621.5" width="901" height="165"></rect>
</svg>
<span id="tw1" class="t" style="left: 426.6px; font-size: 69px; color: rgb(0, 0, 0); -webkit-text-stroke: 0.7px rgb(255, 255, 255); transform-origin: 0px 0px; transform: scaleX(0.8779); top: 530px;">Haga</span>
<span id="tw2" class="t" style="left: 593px; font-size: 69px; color: rgb(0, 0, 0); -webkit-text-stroke: 0.7px rgb(255, 255, 255); transform-origin: 0px 0px; transform: scaleX(0.9626); top: 530px;">clic</span>
<span id="tw3" class="t" style="left: 709.2px; font-size: 69px; color: rgb(0, 0, 0); -webkit-text-stroke: 0.7px rgb(255, 255, 255); transform-origin: 0px 0px; transform: scaleX(0.9203); top: 530px;">para</span>
<span id="tw4" class="t" style="left: 859.2px; font-size: 69px; color: rgb(0, 0, 0); -webkit-text-stroke: 0.7px rgb(255, 255, 255); transform-origin: 0px 0px; transform: scaleX(0.9503); top: 530px;">agregar</span>
<span id="tw5" class="t" style="left: 1102px; font-size: 69px; color: rgb(0, 0, 0); -webkit-text-stroke: 0.7px rgb(255, 255, 255); letter-spacing: 2.12px; top: 530px;">título</span>
<span id="sw1" class="t" style="left: 652.9px; font-size: 27.5px; color: rgb(0, 0, 0); -webkit-text-stroke: 0.2px rgb(255, 255, 255); transform-origin: 0px 0px; transform: scaleX(0.897); top: 627px;">Haga</span>
<span id="sw2" class="t" style="left: 720.6px; font-size: 27.5px; color: rgb(0, 0, 0); -webkit-text-stroke: 0.2px rgb(255, 255, 255); transform-origin: 0px 0px; transform: scaleX(0.974); top: 627px;">clic</span>
<span id="sw3" class="t" style="left: 767.6px; font-size: 27.5px; color: rgb(0, 0, 0); -webkit-text-stroke: 0.2px rgb(255, 255, 255); transform-origin: 0px 0px; transform: scaleX(0.9517); top: 627px;">para</span>
<span id="sw4" class="t" style="left: 827.6px; font-size: 27.5px; color: rgb(0, 0, 0); -webkit-text-stroke: 0.2px rgb(255, 255, 255); transform-origin: 0px 0px; transform: scaleX(0.9533); top: 627px;">agregar</span>
<span id="sw5" class="t" style="left: 926.4px; font-size: 27.5px; color: rgb(0, 0, 0); -webkit-text-stroke: 0.2px rgb(255, 255, 255); transform-origin: 0px 0px; transform: scaleX(1.0432); top: 627px;">subtítulo</span>
</div>
<!-- ===== COPILOT ===== -->
<div id="copilot">
<!-- header -->
<svg style="left:1490px;top:232px" width="50" height="40" viewBox="0 0 50 40">
 <defs>
  <linearGradient id="cg1" x1="0.6" y1="0" x2="0.3" y2="1"><stop offset="0" stop-color="#f0447e"></stop><stop offset="0.45" stop-color="#f9654a"></stop><stop offset="1" stop-color="#ffb24c"></stop></linearGradient>
  <linearGradient id="cg2" x1="0.6" y1="0" x2="0.35" y2="1"><stop offset="0" stop-color="#a24ae6"></stop><stop offset="0.5" stop-color="#e03e9a"></stop><stop offset="1" stop-color="#f68a55"></stop></linearGradient>
  <linearGradient id="cg3" x1="0" y1="0" x2="0" y2="1"><stop offset="0" stop-color="#a02068"></stop><stop offset="1" stop-color="#d03c8a"></stop></linearGradient>
  <linearGradient id="cg4" x1="0" y1="0" x2="0" y2="1"><stop offset="0" stop-color="#e03a48"></stop><stop offset="1" stop-color="#c41f34"></stop></linearGradient>
 </defs>
 <path d="M24.3 8.3 Q27.6 8.4 28.4 11.4 Q29.2 14.6 31 15.2 L26.6 15.3 L21.6 16.4 L23.4 9.8 Z" fill="url(#cg3)"></path>
 <path d="M12.6 26 L22.2 26.2 L20.8 31 L19 33.8 Q16.6 33.6 15.8 31 Q14.8 27.2 12.6 26 Z" fill="url(#cg4)"></path>
 <path d="M13.4 8.1 H25 Q23.6 8.6 22.8 11 L18.6 24 Q18 26 16 26 H10.4 Q7.6 25.8 8 22.4 Q8.8 16 11 10.8 Q12 8.4 13.4 8.1 Z" fill="url(#cg1)"></path>
 <path d="M28 15.2 H33.4 Q36.4 15.4 36 18.8 Q35.2 25 33 30.6 Q31.8 33.6 29.2 33.8 H19.2 Q21 33.4 21.8 30.8 L25.8 17.4 Q26.4 15.4 28 15.2 Z" fill="url(#cg2)"></path>
</svg>
<span class="t" style="left: 1533.5px; font-size: 28px; color: rgb(46, 46, 46); -webkit-text-stroke: 0.5px rgb(240, 240, 240); top: 240px; letter-spacing: -0.453px;">Copilot</span>
<svg style="left:1842px;top:250px" width="19" height="11" viewBox="0 0 19 11" fill="none" stroke="#2a2a2a" stroke-width="1.3"><path d="M0.6 1 L9.4 9.6 L18.2 1"></path></svg>
<svg style="left:1885px;top:248px" width="14" height="14" viewBox="0 0 14 14" fill="none" stroke="#2a2a2a" stroke-width="1.3"><path d="M0.8 0.8 L13.4 13.4 M13.4 0.8 L0.8 13.4"></path></svg>
<!-- message card -->
<div class="a" style="left:1518px;top:313px;width:367px;height:324.5px;background:#fff;border-radius:9px;box-shadow:0 2px 5px rgba(0,0,0,.13),0 0 2px rgba(0,0,0,.10);"></div>
<span class="t" style="left: 1532.2px; font-size: 17.5px; color: rgb(51, 51, 51); -webkit-text-stroke: 0.2px rgb(255, 255, 255); top: 334px; letter-spacing: -0.1px;">Puedo chatear, responder a preguntas y</span>
<span class="t" style="left: 1533.2px; font-size: 17.5px; color: rgb(51, 51, 51); -webkit-text-stroke: 0.2px rgb(255, 255, 255); top: 359px; letter-spacing: -0.149px;">ayudarle a redactar esta presentación.</span>
<span class="t" style="left: 1532.2px; font-size: 17.5px; color: rgb(51, 51, 51); -webkit-text-stroke: 0.2px rgb(255, 255, 255); top: 409px; letter-spacing: -0.091px;">Puede probar los siguientes</span>
<span class="t" style="left: 1533.2px; font-size: 17.5px; color: rgb(51, 51, 51); -webkit-text-stroke: 0.2px rgb(255, 255, 255); top: 434px; letter-spacing: -0.074px;">procedimientos...</span>
<div class="a" style="left:1533px;top:463px;width:337px;height:50px;background:#fff;border:1px solid #d1d1d1;border-radius:4px;"></div>
<div class="a" style="left:1533px;top:518px;width:337px;height:50px;background:#fff;border:1px solid #d1d1d1;border-radius:4px;"></div>
<div class="a" style="left:1533px;top:573px;width:337px;height:50px;background:#fff;border:1px solid #d1d1d1;border-radius:4px;"></div>
<span class="t" style="left: 1591.5px; font-size: 17.5px; color: rgb(51, 51, 51); -webkit-text-stroke: 0.2px rgb(255, 255, 255); top: 481px; letter-spacing: -0.259px;">Crear una presentación...</span>
<span class="t" style="left: 1591.5px; font-size: 17.5px; color: rgb(51, 51, 51); -webkit-text-stroke: 0.2px rgb(255, 255, 255); top: 524px; letter-spacing: -0.083px;">Crear presentación a partir de</span>
<span class="t" style="left: 1591.5px; font-size: 17.5px; color: rgb(51, 51, 51); -webkit-text-stroke: 0.2px rgb(255, 255, 255); top: 549px; letter-spacing: -0.35px;">archivo...</span>
<span class="t" style="left: 1591.5px; font-size: 17.5px; color: rgb(51, 51, 51); -webkit-text-stroke: 0.2px rgb(255, 255, 255); top: 591px; letter-spacing: -0.112px;">Agregar una diapositiva sobre...</span>
<svg style="left:1556px;top:476px" width="27" height="24" viewBox="0 0 27 24" fill="none" stroke="#2a2a2a" stroke-width="1.7">
 <path d="M3.6 17.6 Q1.2 17 1.2 13.6 V5 Q1.2 1.2 5 1.2 H19.4 Q22.6 1.2 23.2 3.6"></path>
 <rect x="5.6" y="5.6" width="19.6" height="16.4" rx="3.4"></rect>
</svg>
<svg style="left:1557px;top:530px" width="25" height="27" viewBox="0 0 25 27" fill="none" stroke="#2a2a2a" stroke-width="1.7">
 <path d="M4.4 9.6 V4.6 Q4.4 1.2 7.8 1.2 H14.6 L22.6 9.2 V20.6 Q22.6 24 19.2 24 H17.6"></path>
 <path d="M14.4 1.6 V6.2 Q14.4 9.4 17.6 9.4 H22.2"></path>
 <circle cx="7" cy="17" r="5.4"></circle><path d="M10.8 21 L16 26.2"></path>
</svg>
<svg style="left:1556px;top:588px" width="27" height="22" viewBox="0 0 27 22" fill="none" stroke="#2a2a2a" stroke-width="1.7">
 <rect x="1" y="1" width="24.4" height="19.4" rx="3.6"></rect>
 <rect x="5.6" y="5.6" width="15.2" height="10.2" rx="1"></rect>
 <path d="M5.6 9.6 H20.8 M10.6 9.6 V15.8"></path>
</svg>
<!-- input card -->
<div class="a" style="left:1518px;top:784px;width:367px;height:166.3px;background:#fff;border-radius:9px;overflow:hidden;box-shadow:inset 0 0 0 1px #e2e2e2;"><div class="a" style="left:0;bottom:0;width:367px;height:6.8px;background:linear-gradient(90deg,#e04a28,#c43e1c);"></div></div>
<span class="t" style="left: 1538.8px; font-size: 17.5px; color: rgb(51, 51, 51); -webkit-text-stroke: 0.2px rgb(255, 255, 255); top: 811px; letter-spacing: -0.148px;">Crea una presentación colorida acerca de</span>
<span class="t" style="left: 1538.8px; font-size: 17.5px; color: rgb(51, 51, 51); -webkit-text-stroke: 0.2px rgb(255, 255, 255); top: 836px; letter-spacing: -0.199px;">los avances tecnológicos, desde el 2012</span>
<span class="t" style="left: 1538.8px; font-size: 17.5px; color: rgb(51, 51, 51); -webkit-text-stroke: 0.2px rgb(255, 255, 255); top: 861px; letter-spacing: -0.076px;">hasta la actualidad</span>
<span class="t" style="left: 1539.2px; font-size: 12.5px; color: rgb(112, 112, 112); top: 907px; letter-spacing: 0.045px;">100/2000</span>
<div class="a" style="left:1788px;top:890px;width:1px;height:39px;background:#dcdcdc;"></div>
<svg style="left:1759px;top:899px" width="19" height="21" viewBox="0 0 19 21" fill="none" stroke="#3a3a3a" stroke-width="1.4"><g transform="translate(0.50 0.50)">
 <path d="M1 18 V3.4 Q1 1 3.4 1 H15 Q17.4 1 17.4 3.4 V16.6 H2.6 Q1 16.6 1 18 Q1 19.8 3 19.8 H17.6"></path>
 <rect x="5" y="4.4" width="8.4" height="2.6" rx="0.6"></rect>
</g></svg>
<svg style="left:1806px;top:899px" width="16" height="21" viewBox="0 0 16 21" fill="none" stroke="#3a3a3a" stroke-width="1.4"><g transform="translate(0.50 0.50)">
 <rect x="4.6" y="0.8" width="6.8" height="12" rx="3.4"></rect>
 <path d="M1.2 9.6 Q1.2 16 8 16 Q14.8 16 14.8 9.6 M8 16 V20.2"></path>
</g></svg>
<svg style="left:1848px;top:900px" width="22" height="20" viewBox="0 0 22 20" fill="none" stroke="#3a3a3a" stroke-width="1.4" stroke-linejoin="round"><g transform="translate(0.50 0.00)">
 <path d="M1.2 1.2 L20.4 9.8 L1.2 18.6 L4.4 9.8 Z M4.6 9.8 H12"></path>
</g></svg>
</div>
<!-- ===== STATUS BAR ===== -->
<div id="status">
<span class="t" style="left: 14px; font-size: 13px; color: rgb(68, 68, 68); top: 1001px; letter-spacing: 0.12px;">Diapositiva 1 de 1</span>
<span class="t" style="left: 159.8px; font-size: 13px; color: rgb(68, 68, 68); top: 1001px; letter-spacing: -0.115px;">Español (España)</span>
<span class="t" style="left: 304px; font-size: 13px; color: rgb(68, 68, 68); top: 1001px; letter-spacing: 0.179px;">Accesibilidad: todo correcto</span>
<svg style="left:281px;top:997px" width="20" height="20" viewBox="0 0 20 20" fill="none" stroke="#333" stroke-width="1.1">
 <circle cx="8.6" cy="3.4" r="2"></circle>
 <path d="M1.6 5.2 Q5 7.4 8.6 7.4 Q12.2 7.4 15.6 5.2 M6 7.4 V11.6 L3.6 18.4 M11.2 7.4 V10"></path>
 <path d="M10.4 14.4 L13.2 17.2 L18.6 11.2" stroke-width="1.3"></path>
</svg>
<svg style="left:1390px;top:997px" width="21" height="20" viewBox="0 0 21 20" fill="none" stroke="#333" stroke-width="1.2">
 <path d="M7.2 4.2 L10.2 1.2 L13.2 4.2"></path><path d="M0.4 8.4 H20 M0.4 12.4 H20 M0.4 16.6 H20"></path>
</svg>
<span class="t" style="left: 1412px; font-size: 13.5px; color: rgb(51, 51, 51); top: 1001px; letter-spacing: -0.156px;">Notas</span>
<div class="a" style="left:1471px;top:994px;width:50px;height:26px;background:#e0e0e0;"></div>
<svg style="left:1487px;top:999px" width="19" height="16" viewBox="0 0 19 16" fill="none" stroke="#3a3a3a" stroke-width="1.3">
 <rect x="0.8" y="1" width="17" height="14"></rect><path d="M4.6 1 V15 M4.6 12 H17.8"></path><rect x="8.4" y="4.4" width="5.4" height="3" fill="#8a8a8a" stroke-width="1.2"></rect>
</svg>
<svg style="left:1536px;top:999px" width="19" height="16" viewBox="0 0 19 16" fill="none" stroke="#3a3a3a" stroke-width="1.5"><g transform="translate(0.50 0.30)">
 <rect x="0.9" y="0.8" width="6.4" height="5"></rect><rect x="11" y="0.8" width="6.4" height="5"></rect><rect x="0.9" y="9.6" width="6.4" height="5"></rect><rect x="11" y="9.6" width="6.4" height="5"></rect>
</g></svg>
<svg style="left:1586px;top:998px" width="18" height="17" viewBox="0 0 18 17" fill="none" stroke="#3a3a3a" stroke-width="1.3"><g transform="translate(0.50 0.00)">
 <path d="M8.6 2 Q6 0.8 0.9 0.9 V14 Q6 13.8 8.6 15.6 Q11.2 13.8 16.4 14 V0.9 Q11.2 0.8 8.6 2 V15.4"></path>
 <path d="M3 4.4 H6.4 M3 7 H6.4 M3 9.6 H6.4 M3 12 H6.4 M10.8 4.4 H14.2 M10.8 7 H14.2 M10.8 9.6 H14.2 M10.8 12 H14.2" stroke-width="1"></path>
</g></svg>
<svg style="left:1637px;top:998px" width="17" height="17" viewBox="0 0 17 17" fill="none" stroke="#3a3a3a" stroke-width="1.4"><g transform="translate(0.00 0.30)">
 <path d="M0.4 0.9 H16.6 M2.2 1 V9.2 H14.8 V1 M8.5 9.2 V15 M4.4 15.2 H12.8"></path><path d="M5.2 4.2 H11.8" stroke-width="1.1"></path>
</g></svg>
<svg style="left:1678px;top:1000px" width="160" height="15" viewBox="0 0 160 15" fill="none" stroke="#444" stroke-width="1.1">
 <path d="M0.4 6.8 H9.4"></path><path d="M16.4 6.8 H140.4" stroke="#6a6a6a" stroke-width="1"></path><path d="M78.8 3.4 V10.2" stroke="#6a6a6a" stroke-width="1"></path>
 <rect x="59.4" y="0" width="5.4" height="14" fill="#5e5e5e" stroke="none"></rect>
 <path d="M147 6.8 H156 M151.5 2.2 V11.4"></path>
</svg>
<span class="t" style="left: 1851px; font-size: 13px; color: rgb(68, 68, 68); top: 1001px; letter-spacing: -0.285px;">75 %</span>
<svg style="left:1895px;top:997px" width="19" height="20" viewBox="0 0 19 20" fill="none" stroke="#333" stroke-width="1.1">
 <rect x="5.4" y="6" width="8" height="8"></rect><path d="M6.4 3.4 L9.4 0.8 L12.4 3.4 M6.4 16.6 L9.4 19.2 L12.4 16.6 M2.8 7 L0.6 10 L2.8 13 M16 7 L18.2 10 L16 13"></path>
</svg>
</div>


</body></html>
